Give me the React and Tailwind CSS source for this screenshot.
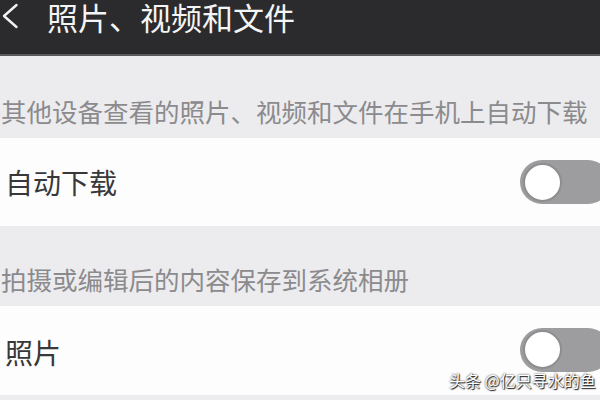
import React from "react";

const font = { fontFamily: '"Noto Sans CJK SC", "Noto Sans", sans-serif' };

function Toggle() {
  return (
    <div className="-mr-[10px] flex h-[44px] w-[90px] items-center rounded-full bg-[#9d9c9e] pl-[3px]">
      <div className="h-[39px] w-[39px] rounded-full border-[2px] border-[#8e8d8f] bg-white" />
    </div>
  );
}

export default function App() {
  return (
    <div className="relative flex h-[400px] w-[600px] flex-col overflow-hidden bg-[#ececee]" style={font}>
      <div className="flex h-[56px] shrink-0 items-start border-b-[2px] border-[#5a595c] bg-[#2b2a2d] pt-[1px]">
        <svg width="24" height="32" viewBox="0 0 24 32" className="-mt-[1px]">
          <polyline points="16.5,5 4,16 16.5,27" fill="none" stroke="#f2f2f2" strokeWidth="2.4" strokeLinecap="round" strokeLinejoin="round" />
        </svg>
        <div className="ml-[23px] text-[31px] leading-[31px] text-[#f4f4f4]">照片、视频和文件</div>
      </div>
      <div className="flex h-[82px] shrink-0 items-end pb-[15px] pl-[1px] text-[25.5px] leading-[25px] text-[#8b8a8d]">
        其他设备查看的照片、视频和文件在手机上自动下载
      </div>
      <div className="flex h-[88px] shrink-0 items-center justify-between bg-[#fdfdfd] pl-[5px]">
        <span className="text-[28px] leading-[28px] text-[#38373a]">自动下载</span>
        <Toggle />
      </div>
      <div className="flex h-[80px] shrink-0 items-end pb-[15px] pl-[1px] text-[25.5px] leading-[25px] text-[#8b8a8d]">
        拍摄或编辑后的内容保存到系统相册
      </div>
      <div className="flex h-[89px] shrink-0 items-center justify-between bg-[#fdfdfd] pl-[5px]">
        <span className="mt-[2px] text-[28px] leading-[28px] text-[#38373a]">照片</span>
        <div className="-mt-[2px]">
          <Toggle />
        </div>
      </div>
      <div className="absolute left-[449px] top-[370px] text-[16px] leading-[20px] text-white [text-shadow:0_0_2px_#222,1px_1px_1px_#222]">
        头条 @亿只寻水的鱼
      </div>
    </div>
  );
}
